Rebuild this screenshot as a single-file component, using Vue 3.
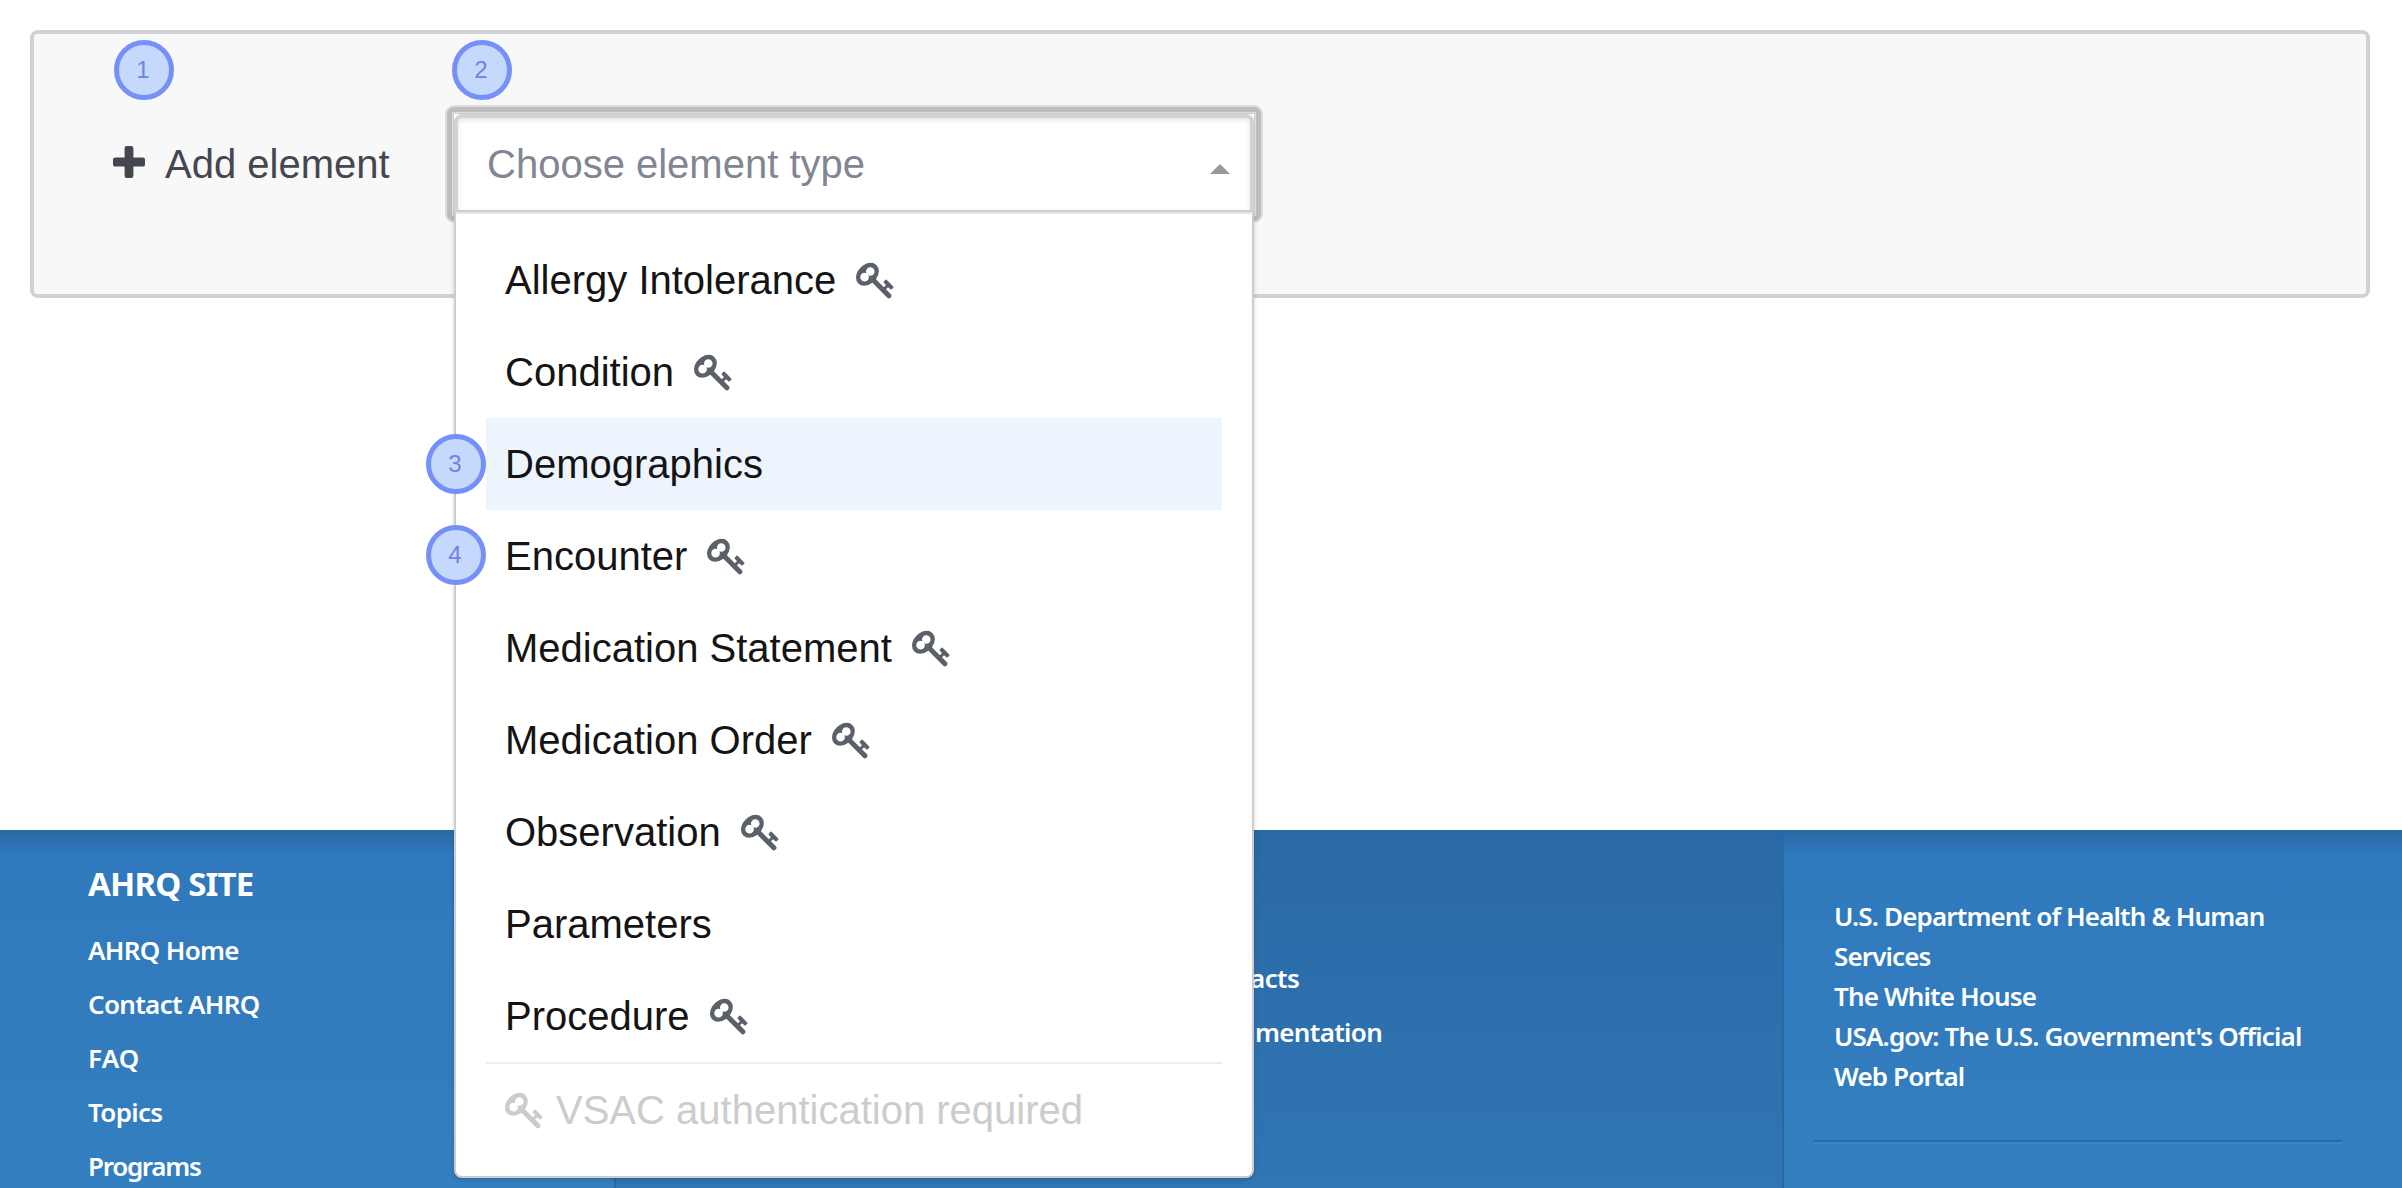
<script setup>
const KEY_PATH =
  'M832 512q0-80-56-136t-136-56-136 56-56 136q0 42 19 83-41-19-83-19-80 0-136 56t-56 136 56 136 136 56 136-56 56-136q0-42-19-83 41 19 83 19 80 0 136-56t56-136zm851 704q0 17-49 66t-66 49q-9 0-28.5-16t-36.5-33-38.5-40-24.5-26l-96 96 220 220q28 28 28 68 0 42-39 81t-81 39q-40 0-68-28l-671-671q-176 131-365 131-163 0-265.5-102.5t-102.5-265.5q0-160 95-313t248-248 313-95q163 0 265.5 102.5t102.5 265.5q0 189-131 365l355 355 96-96q-3-3-26-24.5t-40-38.5-33-36.5-16-28.5q0-17 49-66t66-49q13 0 23 10 6 6 46 44.5t82 79.5 86.5 86 73 78 28.5 41z'

const elementTypes = [
  { label: 'Allergy Intolerance', vsac: true },
  { label: 'Condition', vsac: true },
  { label: 'Demographics', vsac: false, focused: true },
  { label: 'Encounter', vsac: true },
  { label: 'Medication Statement', vsac: true },
  { label: 'Medication Order', vsac: true },
  { label: 'Observation', vsac: true },
  { label: 'Parameters', vsac: false },
  { label: 'Procedure', vsac: true },
]

const siteLinks = ['AHRQ Home', 'Contact AHRQ', 'FAQ', 'Topics', 'Programs']
const toolLinks = ['Contacts', 'Documentation']
</script>

<template>
  <div class="page">
    <section class="builder">
      <div class="add-label">
        <svg class="plus" viewBox="0 0 32 32" aria-hidden="true">
          <path d="M13.8 0h4.400a2.200 2.200 0 0 1 2.200 2.200v9.200h9.400a2.200 2.200 0 0 1 2.200 2.200v4.800a2.200 2.200 0 0 1-2.200 2.200h-9.400v9.200a2.200 2.200 0 0 1-2.200 2.200h-4.400a2.200 2.200 0 0 1-2.200-2.200v-9.200H2.200A2.200 2.200 0 0 1 0 18.400v-4.800a2.200 2.200 0 0 1 2.200-2.200h9.400V2.200A2.200 2.200 0 0 1 13.800 0z" />
        </svg>
        <span>Add element</span>
      </div>

      <div class="select">
        <div class="control">
          <div class="field">
            <span>Choose element type</span>
            <i class="arrow"></i>
          </div>
        </div>
        <div class="menu">
          <ul>
            <li v-for="type in elementTypes" :key="type.label" :class="{ focused: type.focused }">
              <span>{{ type.label }}</span>
              <svg v-if="type.vsac" class="key" viewBox="0 0 1792 1792" aria-hidden="true"><path :d="KEY_PATH" /></svg>
            </li>
          </ul>
          <div class="note">
            <svg class="key" viewBox="0 0 1792 1792" aria-hidden="true"><path :d="KEY_PATH" /></svg>
            <span>VSAC authentication required</span>
          </div>
        </div>
      </div>
    </section>

    <footer class="footer">
      <nav class="col site">
        <h2>AHRQ SITE</h2>
        <a v-for="link in siteLinks" :key="link" :class="{ tight: link === 'Programs', wide: link === 'FAQ' }">{{ link }}</a>
      </nav>
      <nav class="col tool">
        <a v-for="link in toolLinks" :key="link">{{ link }}</a>
      </nav>
      <div class="col gov">
        <p>
          U.S. Department of Health &amp; Human<br />Services<br />The White House<br />USA.gov: The U.S. Government's Official<br />Web Portal
        </p>
        <hr />
      </div>
    </footer>

    <span class="step step-1">1</span>
    <span class="step step-2">2</span>
    <span class="step step-3">3</span>
    <span class="step step-4">4</span>
  </div>
</template>

<style>
body {
  margin: 0;
  background: #fff;
}
</style>

<style scoped>
.page {
  position: relative;
  box-sizing: border-box;
  width: 2402px;
  height: 1188px;
  padding-top: 30px;
  overflow: hidden;
  display: flex;
  flex-direction: column;
  justify-content: space-between;
  font-family: "Liberation Sans", Arial, sans-serif;
  font-size: 40px;
}

.builder {
  box-sizing: border-box;
  height: 268px;
  margin: 0 32px 0 30px;
  padding: 80px 79px 0;
  border: 4px solid #d2d2d2;
  border-radius: 8px;
  background: #f8f8f8;
  display: flex;
  align-items: flex-start;
}
.add-label {
  width: 341px;
  height: 100px;
  display: flex;
  align-items: center;
  gap: 20px;
  color: #444750;
  white-space: nowrap;
}
.plus {
  width: 32px;
  height: 32px;
  margin-top: -4px;
  fill: #444750;
}

.select {
  position: relative;
  width: 800px;
  height: 100px;
}
/* Focus ring */
.select::before {
  content: "";
  position: absolute;
  inset: -9px;
  border: 2px solid #dddddf;
  border-radius: 9px;
  background: #bdbdbf;
}
.control {
  position: relative;
  height: 100px;
  background: #fff;
  box-shadow: 0 0 0 1px #cbcbcc, 0 0 0 2px #dededf;
}
.field {
  box-sizing: border-box;
  height: 100px;
  padding: 0 20px 0 29px;
  border: 4px solid #d2d2d2;
  border-radius: 8px 8px 0 0;
  box-shadow: inset 0 2px 5px rgba(0, 0, 0, 0.1);
  display: flex;
  align-items: center;
  justify-content: space-between;
  color: #808793;
}
.arrow {
  margin-top: 10px;
  border: 10px solid transparent;
  border-top-width: 0;
  border-bottom-color: #999;
}

.menu {
  position: absolute;
  z-index: 2;
  top: 98px;
  left: 0;
  box-sizing: border-box;
  width: 800px;
  height: 966px;
  padding: 20px 30px;
  border: 2px solid #ccc;
  border-top-color: #e6e6e6;
  border-radius: 0 0 8px 8px;
  background: #fff;
  box-shadow: 0 2px 5px rgba(0, 0, 0, 0.16);
}
.menu ul {
  margin: 0;
  padding: 0;
  list-style: none;
}
.menu li,
.note {
  height: 92px;
  padding-left: 19px;
  display: flex;
  align-items: center;
  gap: 20px;
  color: #141414;
  white-space: nowrap;
}
.menu li.focused {
  background: #edf4fe;
}
.note {
  gap: 11px;
  border-top: 2px solid #eee;
  color: #ccc;
}
.key {
  flex: none;
  width: 40px;
  height: 40px;
  fill: #5b616b;
}
.note .key {
  fill: #ccc;
}

.footer {
  height: 358px;
  display: flex;
  font-family: "Noto Sans", "Open Sans", sans-serif;
  font-size: 26px;
  font-weight: 600;
  letter-spacing: -0.67px;
  color: #fff;
}
.col {
  box-sizing: border-box;
}
.site,
.gov {
  background:
    linear-gradient(#2a69a5, rgba(42, 105, 165, 0)) 0 0 / 100% 24px no-repeat,
    linear-gradient(#2f78bd, #347fbf);
}
.site {
  width: 614px;
  padding: 27px 0 0 88px;
}
.site h2 {
  margin: 0 0 12px;
  font-size: 33px;
  line-height: 54px;
  font-weight: 700;
  letter-spacing: -0.85px;
}
.site a,
.tool a {
  display: block;
  line-height: 54px;
}
.site .tight {
  letter-spacing: -1.3px;
}
.site .wide {
  letter-spacing: 0.2px;
}
.tool {
  width: 1170px;
  padding: 121px 0 0 577px;
  border: solid #2869a5;
  border-width: 0 2px;
  background: linear-gradient(#2969a5, #3076b4);
}
.gov {
  flex: 1;
  padding: 66px 60px 0 30px;
}
.gov p {
  margin: 0 0 44px 20px;
  line-height: 40px;
  letter-spacing: -0.86px;
  white-space: nowrap;
}
.gov hr {
  margin: 0;
  border: 0;
  border-top: 2px solid #2869a5;
  border-bottom: 2px solid #3d86c4;
}

/* Numbered walkthrough markers */
.step {
  position: absolute;
  z-index: 3;
  box-sizing: border-box;
  width: 60px;
  height: 60px;
  border: 5px solid #7590f8;
  border-radius: 50%;
  background: #c5d9fc;
  color: #6f83e3;
  font-size: 24px;
  line-height: 49px;
  text-align: center;
  padding-right: 2px;
}
.step-1 { left: 114px; top: 40px; }
.step-2 { left: 452px; top: 40px; }
.step-3 { left: 426px; top: 434px; }
.step-4 { left: 426px; top: 525px; }
</style>
